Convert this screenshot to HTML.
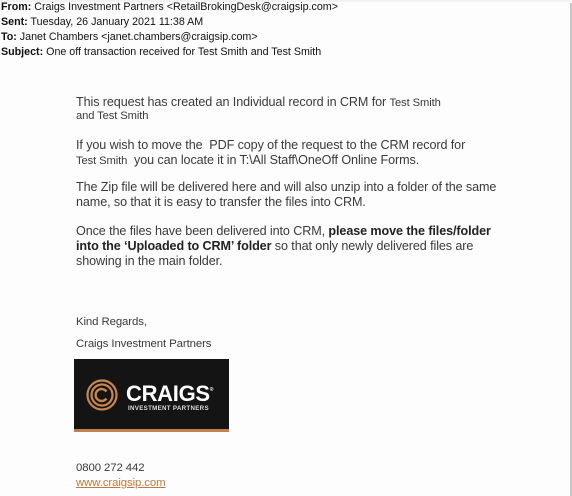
<!DOCTYPE html>
<html><head><meta charset="utf-8"><style>
body{margin:0;width:572px;height:496px;background:#fdfdfd;position:relative;overflow:hidden;font-family:"Liberation Sans",sans-serif;color:#333}
.hd{position:absolute;left:1px;font-size:10.7px;color:#111;white-space:nowrap}
.hd b{font-weight:bold}
.t{position:absolute;left:76px;font-size:12.6px;color:#3a3a3a;white-space:nowrap;letter-spacing:-0.1px}
.t b{color:#222}
.s{font-size:11.2px}
.vl{position:absolute;left:570px;top:3px;width:2px;height:493px;background:#c8c8c8}
.top{position:absolute;left:0;top:0;width:572px;height:2px;background:#f2f2f2}
</style></head><body>
<div class="top"></div>
<div class="vl"></div>
<div class="hd" style="top:1px"><b>From:</b> Craigs Investment Partners &lt;RetailBrokingDesk@craigsip.com&gt;</div>
<div class="hd" style="top:16px"><b>Sent:</b> Tuesday, 26 January 2021 11:38 AM</div>
<div class="hd" style="top:31px"><b>To:</b> Janet Chambers &lt;janet.chambers@craigsip.com&gt;</div>
<div class="hd" style="top:46px"><b>Subject:</b> One off transaction received for Test Smith and Test Smith</div>

<div class="t" style="top:95px">This request has created an Individual record in CRM for <span class="s">Test Smith</span></div>
<div class="t s" style="top:110px">and Test Smith</div>
<div class="t" style="top:138px">If you wish to move the&nbsp; PDF copy of the request to the CRM record for</div>
<div class="t" style="top:153px"><span class="s">Test Smith</span>&nbsp; you can locate it in T:\All Staff\OneOff Online Forms.</div>
<div class="t" style="top:180px">The Zip file will be delivered here and will also unzip into a folder of the same</div>
<div class="t" style="top:195px">name, so that it is easy to transfer the files into CRM.</div>
<div class="t" style="top:224px">Once the files have been delivered into CRM, <b>please move the files/folder</b></div>
<div class="t" style="top:239px"><b>into the ‘Uploaded to CRM’ folder</b> so that only newly delivered files are</div>
<div class="t" style="top:254px">showing in the main folder.</div>

<div class="t" style="top:316px;font-size:11.4px">Kind Regards,</div>
<div class="t" style="top:338px;font-size:11.4px">Craigs Investment Partners</div>

<div style="position:absolute;left:74px;top:359px;width:155px;height:70px;background:#141414"></div>
<div style="position:absolute;left:74px;top:429px;width:155px;height:3px;background:#c08050"></div>
<svg style="position:absolute;left:86px;top:379px" width="32" height="32" viewBox="0 0 32 32">
<circle cx="16" cy="16" r="14.5" fill="none" stroke="#c8864f" stroke-width="2.2"/>
<circle cx="16" cy="16" r="10.5" fill="none" stroke="#c8864f" stroke-width="2.2"/>
<path d="M20.5 12.5 A6 6 0 1 0 20.5 19.5" fill="none" stroke="#c8864f" stroke-width="2.4"/>
</svg>
<div style="position:absolute;left:126px;top:381px;color:#fff;font-weight:bold;font-size:22px;letter-spacing:-0.3px;line-height:26px">CRAIGS<sup style="font-size:5px;vertical-align:top;position:relative;top:-4px">®</sup></div>
<div style="position:absolute;left:128px;top:405px;color:#ddd;font-weight:bold;font-size:6.2px;letter-spacing:0.3px">INVESTMENT PARTNERS</div>

<div class="t" style="top:462px;font-size:11.4px">0800 272 442</div>
<div class="t" style="top:477px;font-size:11.4px;color:#c07a40;text-decoration:underline">www.craigsip.com</div>
</body></html>
